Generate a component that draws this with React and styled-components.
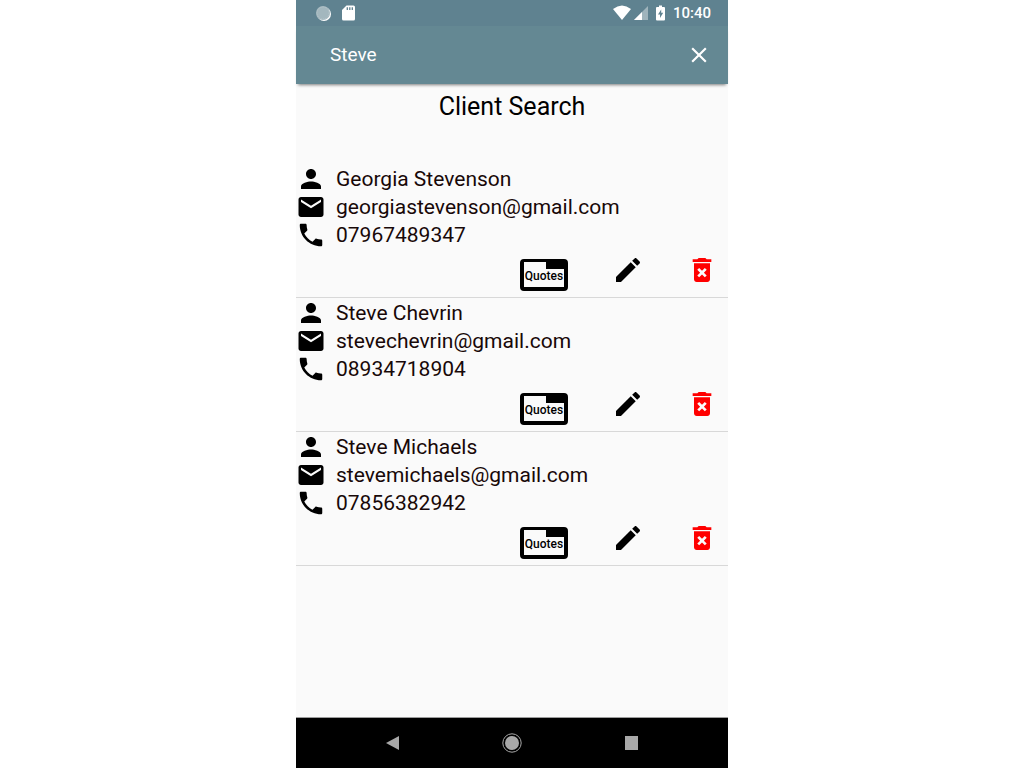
import React, { useState } from 'react';
import styled, { createGlobalStyle } from 'styled-components';

const GlobalStyle = createGlobalStyle`
  *, *::before, *::after { box-sizing: border-box; }
  body { margin: 0; background: #ffffff; font-family: Roboto, "Liberation Sans", sans-serif; color: #000000; }
  svg { display: block; }
`;

const Screen = styled.div`
  display: flex;
  flex-direction: column;
  width: 100%;
  max-width: 432px;
  min-height: 100vh;
  margin: 0 auto;
  background: #fafafa;
`;

const StatusBar = styled.div`
  display: flex;
  align-items: center;
  justify-content: space-between;
  height: 26px;
  padding: 0 17px 0 20px;
  background: #5f8290;
  color: #ffffff;
`;

const StatusGroup = styled.div`
  display: flex;
  align-items: center;
  gap: ${(p) => p.$gap}px;
`;

const Clock = styled.time`
  font-size: 15px;
  line-height: 26px;
  font-weight: 500;
`;

const SearchBar = styled.header`
  display: flex;
  align-items: center;
  height: 58px;
  padding: 0 16px 0 34px;
  background: #648893;
  box-shadow: 0 3px 3px -2px rgba(0, 0, 0, 0.5);
`;

const SearchInput = styled.input`
  flex: 1;
  min-width: 0;
  padding: 0;
  border: 0;
  outline: 0;
  background: transparent;
  color: #ffffff;
  font: 400 19px/24px Roboto, "Liberation Sans", sans-serif;
`;

const IconButton = styled.button`
  display: flex;
  padding: 0;
  border: 0;
  background: transparent;
  color: ${(p) => p.$color || '#000000'};
  cursor: pointer;
`;

const Main = styled.main`
  flex: 1;
`;

const Title = styled.h1`
  margin: 0;
  padding: 8px 0 42px;
  font-size: 25px;
  line-height: 30px;
  font-weight: 400;
  text-align: center;
`;

const ClientList = styled.ul`
  margin: 0;
  padding: 0;
  list-style: none;
`;

const ClientItem = styled.li`
  padding-top: 1px;
  border-bottom: 1px solid #d8d8d8;
`;

const Detail = styled.div`
  display: flex;
  align-items: center;
  gap: 10px;
  height: 28px;
  font-size: 21px;
  line-height: 28px;
  color: #180808;

  svg { color: #000000; }
`;

const Actions = styled.div`
  display: flex;
  justify-content: flex-end;
  align-items: flex-start;
  gap: 42px;
  height: 48px;
  padding: 5px 10px 6px 0;
`;

const QuotesButton = styled.button`
  display: flex;
  justify-content: center;
  align-self: flex-end;
  width: 48px;
  height: 32px;
  margin-right: 2px;
  padding: 1px 0 0;
  border: 4px solid #000000;
  border-top-width: 3px;
  border-radius: 4px;
  background: linear-gradient(#000000, #000000) top right / 18px 7px no-repeat;
  color: #000000;
  font: 500 12px/26px Roboto, "Liberation Sans", sans-serif;
  white-space: nowrap;
  cursor: pointer;
`;

const NavBar = styled.nav`
  display: flex;
  align-items: center;
  justify-content: center;
  gap: 96px;
  height: 51px;
  border-top: 1px solid #9c9c9c;
  background: #000000;
`;

function Icon({ size = 30, d }) {
  return (
    <svg width={size} height={size} viewBox="0 0 24 24" fill="currentColor" aria-hidden="true">
      <path d={d} />
    </svg>
  );
}

const icons = {
  person: 'M12 12c2.21 0 4-1.79 4-4s-1.79-4-4-4-4 1.79-4 4 1.79 4 4 4zm0 2c-2.67 0-8 1.34-8 4v2h16v-2c0-2.66-5.33-4-8-4z',
  mail: 'M20 4H4c-1.100 0-1.990.9-1.990 2L2 18c0 1.100.9 2 2 2h16c1.100 0 2-.9 2-2V6c0-1.100-.9-2-2-2zm0 4l-8 5-8-5V6l8 5 8-5v2z',
  phone: 'M6.620 10.790c1.440 2.830 3.760 5.140 6.590 6.590l2.200-2.200c.27-.27.67-.36 1.020-.24 1.120.37 2.330.57 3.570.57.55 0 1 .45 1 1V20c0 .55-.45 1-1 1-9.390 0-17-7.610-17-17 0-.55.45-1 1-1h3.500c.55 0 1 .45 1 1 0 1.250.2 2.450.57 3.570.11.35.03.74-.25 1.020l-2.200 2.200z',
  edit: 'M3 17.250V21h3.750L17.810 9.940l-3.750-3.750L3 17.250zM20.710 7.040c.39-.39.39-1.020 0-1.410l-2.340-2.340c-.39-.39-1.020-.39-1.410 0l-1.830 1.830 3.750 3.750 1.830-1.830z',
  remove: 'M6 19c0 1.100.9 2 2 2h8c1.100 0 2-.9 2-2V7H6v12zm2.460-7.120l1.410-1.410L12 12.590l2.120-2.120 1.410 1.410L13.410 14l2.120 2.120-1.410 1.410L12 15.410l-2.120 2.120-1.410-1.410L10.590 14l-2.130-2.120zM15.500 4l-1-1h-5l-1 1H5v2h14V4z',
  close: 'M19 6.410L17.590 5 12 10.590 6.410 5 5 6.410 10.590 12 5 17.590 6.410 19 12 13.410 17.590 19 19 17.590 13.410 12z',
};

const clients = [
  { name: 'Georgia Stevenson', email: 'georgiastevenson@gmail.com', phone: '07967489347' },
  { name: 'Steve Chevrin', email: 'stevechevrin@gmail.com', phone: '08934718904' },
  { name: 'Steve Michaels', email: 'stevemichaels@gmail.com', phone: '07856382942' },
];

function Client({ client }) {
  return (
    <ClientItem>
      <Detail><Icon d={icons.person} />{client.name}</Detail>
      <Detail><Icon d={icons.mail} />{client.email}</Detail>
      <Detail><Icon d={icons.phone} />{client.phone}</Detail>
      <Actions>
        <QuotesButton type="button">Quotes</QuotesButton>
        <IconButton type="button" aria-label={`Edit ${client.name}`}><Icon size={32} d={icons.edit} /></IconButton>
        <IconButton type="button" $color="#ff0000" aria-label={`Delete ${client.name}`}><Icon size={32} d={icons.remove} /></IconButton>
      </Actions>
    </ClientItem>
  );
}

export default function App() {
  const [query, setQuery] = useState('Steve');
  return (
    <>
      <GlobalStyle />
      <Screen>
        <StatusBar>
          <StatusGroup $gap={11}>
            <svg width="15" height="15" viewBox="0 0 15 15" aria-hidden="true">
              <circle cx="8" cy="8" r="7" fill="#ffffff" />
              <circle cx="7" cy="7" r="7" fill="#a3b7be" />
              <circle cx="7" cy="7" r="6" fill="none" stroke="#b9c8cd" strokeDasharray="1 1" />
            </svg>
            <svg width="13" height="16" viewBox="0 0 13 16" aria-hidden="true">
              <path fill="#ffffff" d="M4.500 0.500H11.500Q13 .5 13 2V14Q13 15.500 11.500 15.500H1.500Q0 15.500 0 14V5z" />
              <path stroke="#5f8290" strokeWidth="1.300" d="M5.300 2.300v2.600M7.800 2.300v2.600M10.300 2.300v2.600" />
            </svg>
          </StatusGroup>
          <StatusGroup $gap={8}>
            <StatusGroup $gap={3}>
              <svg width="18" height="16" viewBox="0 0 18 16" aria-hidden="true">
                <path fill="#ffffff" d="M0 4Q9-3 18 4L9 15z" />
              </svg>
              <svg width="14" height="16" viewBox="0 0 14 16" aria-hidden="true">
                <path fill="#9fb4bc" d="M14 1V15H0z" />
                <path fill="#ffffff" d="M8 7V15H0z" />
              </svg>
            </StatusGroup>
            <svg width="9" height="16" viewBox="0 0 9 16" aria-hidden="true">
              <path fill="#ffffff" d="M3 0.500h3v1.500h2q1 0 1 1v11.500q0 1-1 1H1q-1 0-1-1V3q0-1 1-1h2z" />
              <path fill="#5f8290" d="M5.200 4.500L2 9.500h2V13l3.200-5.200H5.200z" />
            </svg>
            <Clock>10:40</Clock>
          </StatusGroup>
        </StatusBar>
        <SearchBar>
          <SearchInput
            type="text"
            aria-label="Search clients"
            value={query}
            onChange={(e) => setQuery(e.target.value)}
          />
          <IconButton type="button" $color="#ffffff" aria-label="Clear search" onClick={() => setQuery('')}>
            <Icon size={26} d={icons.close} />
          </IconButton>
        </SearchBar>
        <Main>
          <Title>Client Search</Title>
          <ClientList>
            {clients.map((c) => <Client key={c.email} client={c} />)}
          </ClientList>
        </Main>
        <NavBar aria-label="System">
          <IconButton type="button" aria-label="Back">
            <svg width="24" height="24" viewBox="0 0 24 24" aria-hidden="true">
              <path fill="#a8a8a8" d="M19 5V19L6 12z" />
            </svg>
          </IconButton>
          <IconButton type="button" aria-label="Home">
            <svg width="24" height="24" viewBox="0 0 24 24" aria-hidden="true">
              <circle cx="12" cy="12" r="7" fill="#a8a8a8" />
              <circle cx="12" cy="12" r="9.200" fill="none" stroke="#a8a8a8" />
            </svg>
          </IconButton>
          <IconButton type="button" aria-label="Recent apps">
            <svg width="24" height="24" viewBox="0 0 24 24" aria-hidden="true">
              <rect x="5" y="5" width="13" height="14" fill="#a8a8a8" />
            </svg>
          </IconButton>
        </NavBar>
      </Screen>
    </>
  );
}
